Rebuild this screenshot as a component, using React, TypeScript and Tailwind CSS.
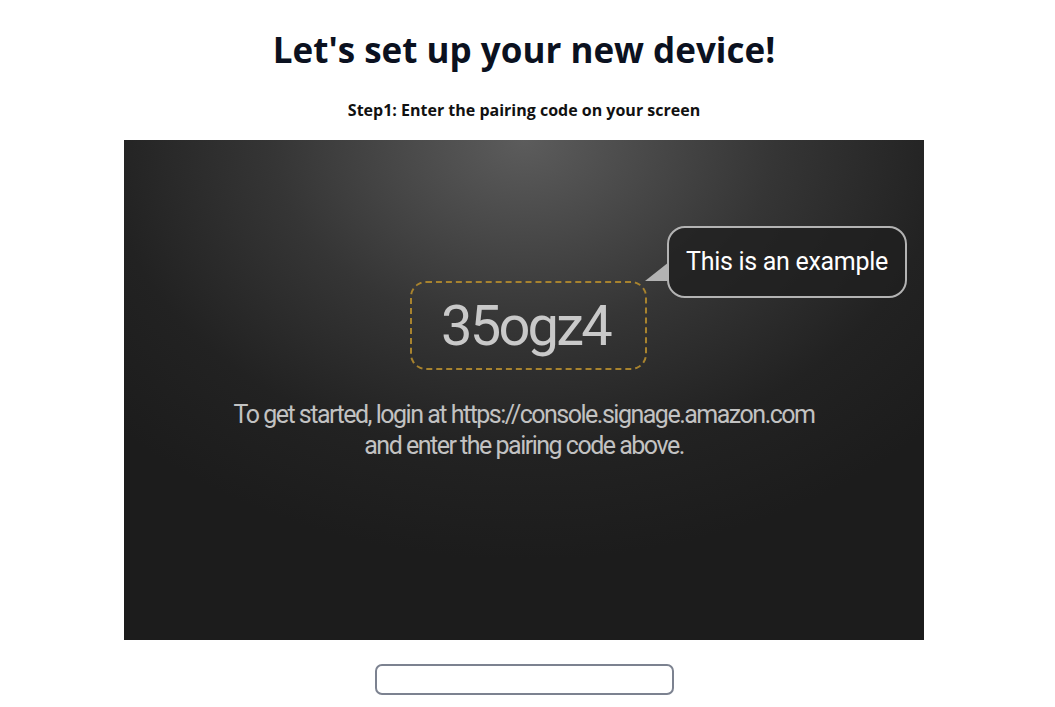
export default function App() {
  return (
    <div className="min-h-screen bg-white flex flex-col items-center pr-[7px]" style={{ fontFamily: "'Open Sans', sans-serif" }}>
      <h1 className="mt-[28px] text-[35px] leading-[44px] font-bold text-[#0b1120]">Let's set up your new device!</h1>
      <p className="mt-[27px] text-[16px] leading-[22px] font-bold text-[#111111]">Step1: Enter the pairing code on your screen</p>

      <div
        className="relative mt-[19px] w-[800px] h-[500px] flex flex-col items-center bg-[radial-gradient(ellipse_560px_420px_at_50%_0%,#5c5c5c_0%,#353535_45%,#222222_75%,#1c1c1c_100%)]"
        style={{ fontFamily: "Roboto, 'Liberation Sans', sans-serif" }}
      >
        <div className="mt-[141px] ml-[9px] w-[237px] h-[89px] rounded-[16px] border-2 border-dashed border-[#a8832e] flex items-center justify-center">
          <span className="mr-[6px] text-[56px] leading-none text-[#c9c9c9] tracking-[-2.8px]">35ogz4</span>
        </div>

        <div className="absolute left-[543px] top-[86px] w-[240px] h-[72px] rounded-[18px] border-2 border-[#b3b3b3] bg-[#1f1f1f]/80 flex items-center justify-center">
          <span className="text-[25px] text-white tracking-[-0.3px]">This is an example</span>
        </div>
        <svg className="absolute left-[520px] top-[120px]" width="26" height="24" viewBox="0 0 26 24">
          <path d="M1 21 L25 2 L25 21 Z" fill="#b3b3b3" />
        </svg>

        <p className="mt-[29px] text-center text-[25px] leading-[31px] text-[#c2c2c2] tracking-[-1.5px]">
          To get started, login at https://console.signage.amazon.com
          <br />
          and enter the pairing code above.
        </p>
      </div>

      <input
        type="text"
        className="mt-[24px] w-[299px] h-[31px] rounded-[7px] border-2 border-[#7c8290] bg-white px-2 text-sm outline-none"
      />
    </div>
  );
}
